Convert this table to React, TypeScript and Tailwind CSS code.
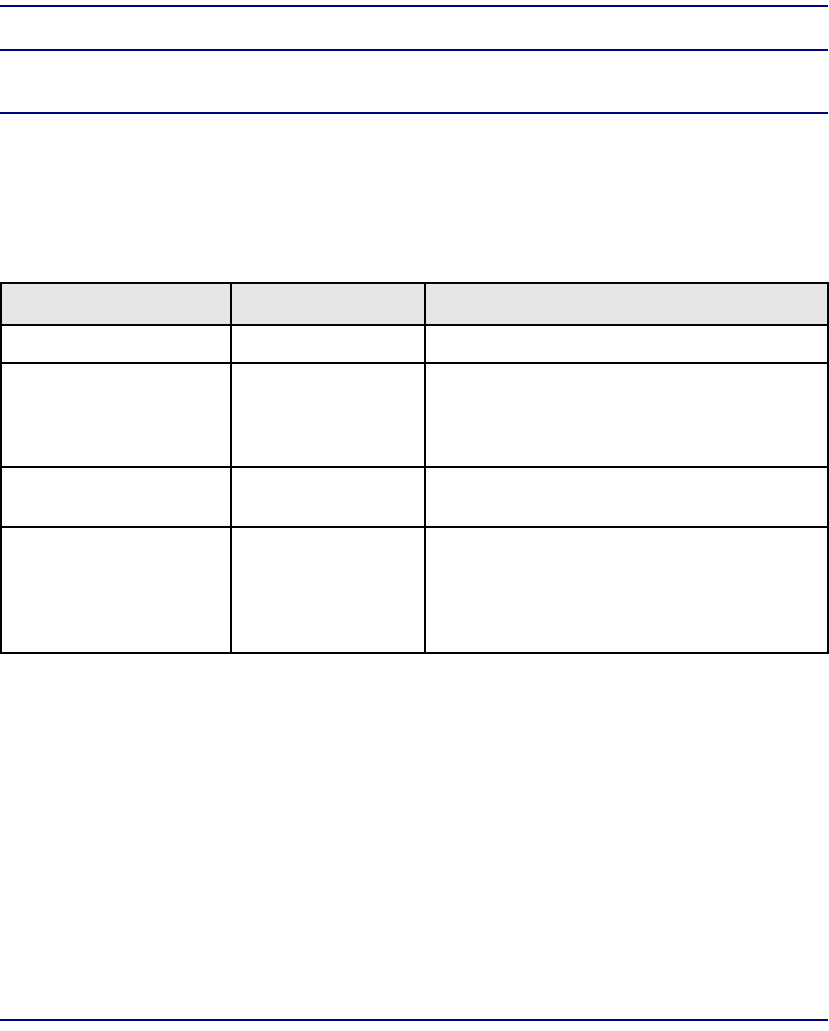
const rows = [
    {h: "h-[42px]", head: true},
    {h: "h-[38px]", head: false},
    {h: "h-[104px]", head: false},
    {h: "h-[60px]", head: false},
    {h: "h-[126px]", head: false},
];

const Rule = () => <div className="h-[2px] w-[828px] bg-[#000080]"/>;

export default function App() {
    return (
        <div className="w-[829px] h-[1031px] bg-white flex flex-col font-['Liberation_Sans',sans-serif]">
            <div className="pt-[5px]">
                <Rule/>
            </div>
            <div className="h-[42px]"/>
            <Rule/>
            <div className="h-[61px]"/>
            <Rule/>
            <div className="h-[168px]"/>
            <div className="w-[829px] border-l-2 border-t-2 border-black">
                {rows.map((row, i) => (
                    <div key={i}
                         className={`grid grid-cols-[230px_194px_1fr] ${row.h} ${row.head ? "bg-[#e6e6e6]" : "bg-white"}`}>
                        <div className="border-r-2 border-b-2 border-black"/>
                        <div className="border-r-2 border-b-2 border-black"/>
                        <div className="border-r-2 border-b-2 border-black"/>
                    </div>
                ))}
            </div>
            <div className="flex-1"/>
            <div className="pb-[10px]">
                <Rule/>
            </div>
        </div>
    )
}
